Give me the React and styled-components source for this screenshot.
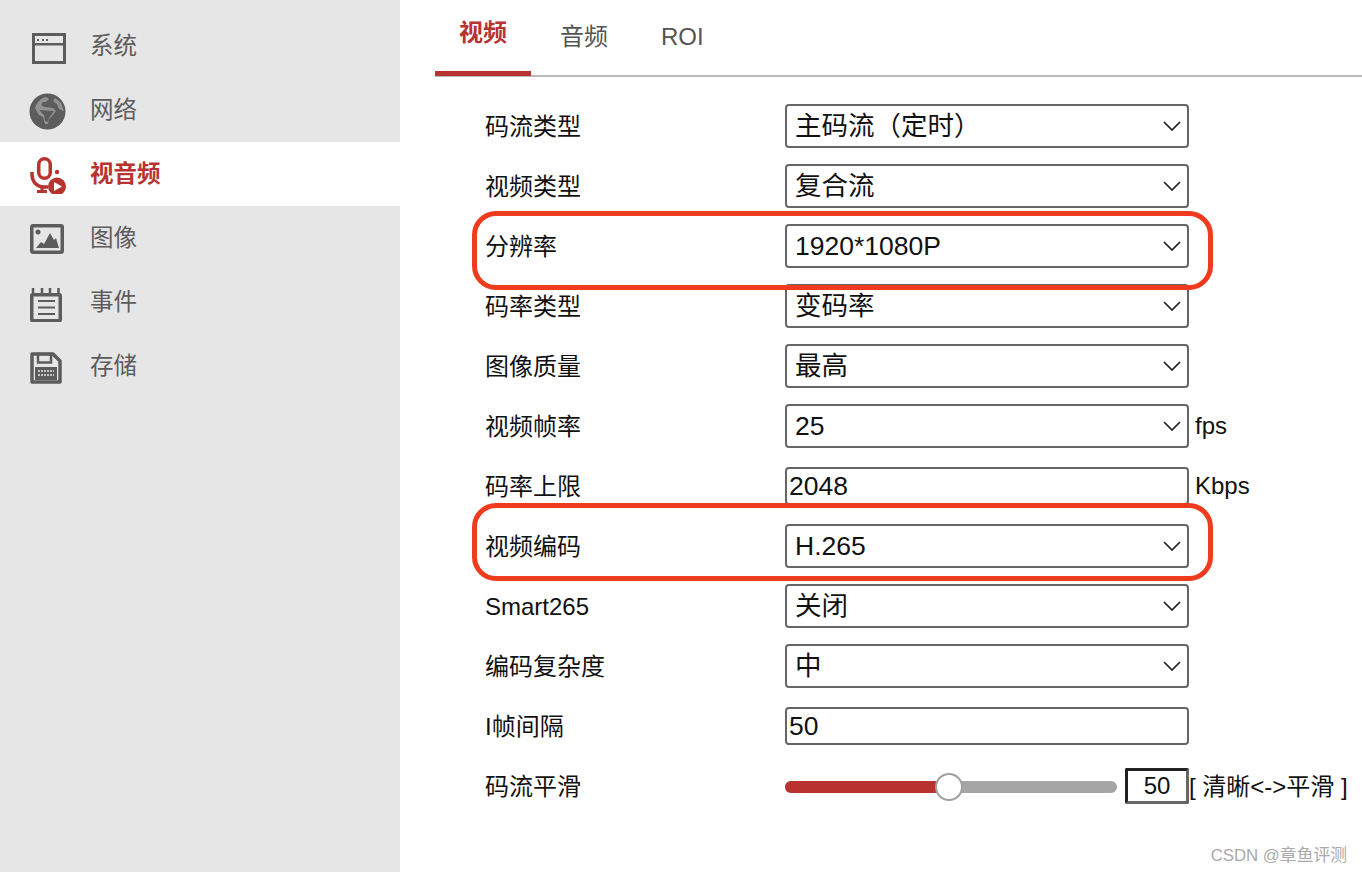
import React from "react";
import styled, { createGlobalStyle } from "styled-components";

const RED = "#b83330";

const GlobalStyle = createGlobalStyle`
  html, body {
    margin: 0;
    padding: 0;
    background: #fff;
    font-family: "Liberation Sans", "Noto Sans CJK SC", sans-serif;
  }
`;

// all nav icons share one 38x40 box, drawn at their place inside it
function WindowIcon() {
  return (
    <NavSvg viewBox="0 0 38 40">
      <rect x="4.5" y="8.5" width="31" height="28" fill="none" stroke="currentColor" strokeWidth="3" />
      <rect x="3" y="17" width="34" height="2.5" fill="currentColor" />
      <rect x="8" y="13" width="2" height="2" fill="currentColor" />
      <rect x="13" y="13" width="2" height="2" fill="currentColor" />
      <rect x="17" y="13" width="2" height="2" fill="currentColor" />
    </NavSvg>
  );
}

function GlobeIcon() {
  return (
    <NavSvg viewBox="0 0 38 40">
      <circle cx="18.5" cy="21.5" r="18" fill="currentColor" />
      <path d="M6 18c2-6 6-10 11-11l3 2-3 3-3 0-2 3 3 2 9 1 3 3-4 5-3 3-1 5-3 0-2-7-4-2-3-5z" fill="#929292" />
      <path d="M26 8l6 5 3 8-5-2-2-5-4-3z" fill="#929292" />
      <path d="M10 20l15 1-5 7-1 4-3-1-1-6z" fill="currentColor" />
    </NavSvg>
  );
}

function MicPlayIcon() {
  return (
    <NavSvg viewBox="0 0 38 40">
      <rect x="9.75" y="4.75" width="11.5" height="19.5" rx="5.75" fill="none" stroke="currentColor" strokeWidth="3.5" />
      <path d="M3 18v2c0 8 5 13 12 13h4" fill="none" stroke="currentColor" strokeWidth="3.5" />
      <path d="M13 33v4.5H8M13 37.5h5" fill="none" stroke="currentColor" strokeWidth="3" />
      <circle cx="28" cy="18" r="2.2" fill="currentColor" />
      <circle cx="28" cy="32.5" r="9" fill="currentColor" />
      <path d="M25 28l8 4.5-8 4.5z" fill="#fff" />
    </NavSvg>
  );
}

function PictureIcon() {
  return (
    <NavSvg viewBox="0 0 38 40">
      <rect x="2.75" y="7.75" width="30.5" height="26.5" rx="1.5" fill="none" stroke="currentColor" strokeWidth="3.5" />
      <circle cx="9" cy="14" r="2.5" fill="currentColor" />
      <path d="M7 30l5-6 3 2 6-11 4 7 2-2 3 10z" fill="currentColor" />
    </NavSvg>
  );
}

function NotesIcon() {
  return (
    <NavSvg viewBox="0 0 38 40">
      <rect x="2.75" y="12.75" width="28.5" height="26" rx="1" fill="none" stroke="currentColor" strokeWidth="3.5" />
      <path d="M4 6v6M13 6v6M21 6v6M29.5 6v6" stroke="currentColor" strokeWidth="2.5" />
      <path d="M9 19h17M9 25.5h17M9 32h17" stroke="currentColor" strokeWidth="2" />
    </NavSvg>
  );
}

function SaveIcon() {
  return (
    <NavSvg viewBox="0 0 38 40">
      <path d="M3 8h21l7 7v21H3z" fill="none" stroke="currentColor" strokeWidth="3.5" strokeLinejoin="round" />
      <rect x="9" y="8" width="13" height="8.5" fill="none" stroke="currentColor" strokeWidth="2.5" />
      <rect x="6" y="21" width="22" height="13" fill="currentColor" />
      <path d="M9 25h16M9 29h16" stroke="#e6e6e6" strokeWidth="1.5" strokeDasharray="2 1" />
    </NavSvg>
  );
}

const NAV = [
  { label: "系统", icon: <WindowIcon /> },
  { label: "网络", icon: <GlobeIcon /> },
  { label: "视音频", icon: <MicPlayIcon />, active: true },
  { label: "图像", icon: <PictureIcon /> },
  { label: "事件", icon: <NotesIcon /> },
  { label: "存储", icon: <SaveIcon /> },
];

const ROWS = [
  { label: "码流类型", value: "主码流（定时）" },
  { label: "视频类型", value: "复合流" },
  { label: "分辨率", value: "1920*1080P", mark: { top: -5, height: 79 } },
  { label: "码率类型", value: "变码率" },
  { label: "图像质量", value: "最高" },
  { label: "视频帧率", value: "25", unit: "fps" },
  { label: "码率上限", value: "2048", unit: "Kbps", input: true },
  { label: "视频编码", value: "H.265", mark: { top: -13, height: 78 } },
  { label: "Smart265", value: "关闭", latin: true },
  { label: "编码复杂度", value: "中" },
  { label: "I帧间隔", value: "50", input: true },
];

const isCjk = (text) => /[^\x00-\x7f]/.test(text);

export default function App() {
  return (
    <>
      <GlobalStyle />
      <Page>
        <Sidebar>
          {NAV.map((item) => (
            <NavItem key={item.label} $active={item.active}>
              {item.icon}
              <NavLabel>{item.label}</NavLabel>
            </NavItem>
          ))}
        </Sidebar>
        <Main>
          <Tabs>
            <Tab $active>视频</Tab>
            <Tab>音频</Tab>
            <Tab>ROI</Tab>
          </Tabs>
          <Form>
            {ROWS.map((row) => (
              <Row key={row.label}>
                {row.mark && <Mark $top={row.mark.top} $height={row.mark.height} />}
                <Label $latin={row.latin}>{row.label}</Label>
                {row.input ? (
                  <TextField>{row.value}</TextField>
                ) : (
                  <Select>
                    <SelectText $cjk={isCjk(row.value)}>{row.value}</SelectText>
                    <Chevron viewBox="0 0 18 10">
                      <path d="M1 1l8 8 8-8" fill="none" stroke="#222" strokeWidth="1.7" />
                    </Chevron>
                  </Select>
                )}
                {row.unit && <Unit>{row.unit}</Unit>}
              </Row>
            ))}
            <Row>
              <Label>码流平滑</Label>
              <Slider>
                <SliderFill />
                <SliderThumb />
              </Slider>
              <ValueBox>50</ValueBox>
              <Hint>[ 清晰&lt;-&gt;平滑 ]</Hint>
            </Row>
          </Form>
        </Main>
        <Watermark>CSDN @章鱼评测</Watermark>
      </Page>
    </>
  );
}

const Page = styled.div`
  position: relative;
  display: flex;
  width: 1362px;
  height: 872px;
  overflow: hidden;
  background: #fff;
`;

const Sidebar = styled.div`
  width: 400px;
  flex-shrink: 0;
  padding-top: 14px;
  box-sizing: border-box;
  background: #e6e6e6;
`;

const NavItem = styled.div`
  display: flex;
  align-items: center;
  height: 64px;
  padding-left: 29px;
  font-size: 23.5px;
  font-weight: ${(props) => (props.$active ? 700 : 400)};
  color: ${(props) => (props.$active ? RED : "#5c5c5c")};
  background: ${(props) => (props.$active ? "#fff" : "transparent")};
`;

const NavSvg = styled.svg`
  width: 38px;
  height: 40px;
  flex-shrink: 0;
`;

const NavLabel = styled.span`
  margin-left: 23px;
  padding-bottom: 4px;
`;

const Main = styled.div`
  flex: 1;
  padding-left: 35px;
`;

const Tabs = styled.div`
  display: flex;
  height: 75px;
  border-bottom: 2px solid #bbb;
`;

const Tab = styled.div`
  position: relative;
  display: flex;
  justify-content: center;
  box-sizing: border-box;
  height: ${(props) => (props.$active ? "76px" : "75px")};
  padding: ${(props) => (props.$active ? "17px 24px 0" : "21px 0 0")};
  width: ${(props) => (props.$active ? "96px" : "auto")};
  margin-right: ${(props) => (props.$active ? "29px" : "53px")};
  font-size: 24px;
  line-height: 32px;
  font-weight: ${(props) => (props.$active ? 700 : 400)};
  color: ${(props) => (props.$active ? RED : "#555")};
  border-bottom: ${(props) => (props.$active ? `5px solid ${RED}` : "none")};
`;

const Form = styled.div`
  padding: 19px 0 0 50px;
`;

const Row = styled.div`
  position: relative;
  display: flex;
  align-items: center;
  height: 60px;
  color: #111;
  font-size: 24px;
`;

const Mark = styled.div`
  position: absolute;
  left: -13px;
  top: ${(props) => props.$top}px;
  width: 741px;
  height: ${(props) => props.$height}px;
  box-sizing: border-box;
  border: 5px solid #f03b1e;
  border-radius: 24px;
  pointer-events: none;
  z-index: 1;
`;

const Label = styled.div`
  width: 300px;
  flex-shrink: 0;
  padding: ${(props) => (props.$latin ? "2px 0 0" : "0 0 4px")};
`;

const Select = styled.div`
  position: relative;
  display: flex;
  align-items: center;
  width: 404px;
  height: 44px;
  padding-left: 8px;
  box-sizing: border-box;
  background: #fff;
  border: 2px solid #666;
  border-radius: 4px;
  font-size: 26.5px;
`;

const SelectText = styled.span`
  padding-bottom: ${(props) => (props.$cjk ? "6px" : "0")};
`;

const Chevron = styled.svg`
  position: absolute;
  right: 6px;
  top: 15px;
  width: 18px;
  height: 10px;
`;

const TextField = styled(Select)`
  padding-left: 2px;
  height: 38px;
`;

const Unit = styled.div`
  margin-left: 6px;
`;

const Slider = styled.div`
  position: relative;
  width: 332px;
  height: 12px;
  margin-top: 2px;
  background: #a5a5a5;
  border-radius: 6px;
`;

const SliderFill = styled.div`
  width: 164px;
  height: 100%;
  background: ${RED};
  border-radius: 6px 0 0 6px;
`;

const SliderThumb = styled.div`
  position: absolute;
  left: 150px;
  top: -8px;
  width: 28px;
  height: 28px;
  box-sizing: border-box;
  background: #fff;
  border: 2px solid #a0a0a0;
  border-radius: 50%;
`;

const ValueBox = styled.div`
  display: flex;
  align-items: center;
  justify-content: center;
  width: 64px;
  height: 36px;
  margin-left: 8px;
  box-sizing: border-box;
  border: 3px solid;
  border-color: #222 #666 #666 #222;
  border-radius: 2px;
`;

const Hint = styled.div`
  padding-bottom: 4px;
  white-space: nowrap;
`;

const Watermark = styled.div`
  position: absolute;
  right: 15px;
  bottom: 6px;
  color: #aaa;
  font-size: 16.8px;
  line-height: 20px;
`;
